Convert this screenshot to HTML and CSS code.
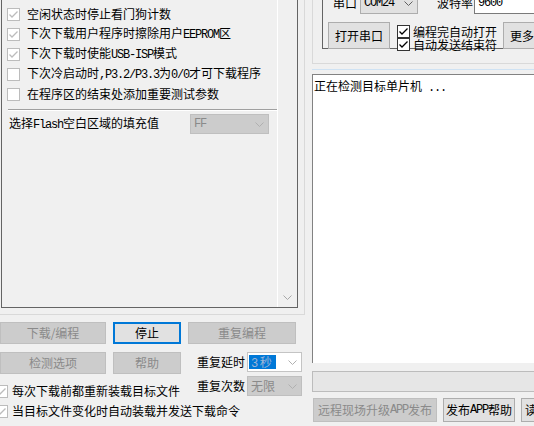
FILE: index.html
```html
<!DOCTYPE html>
<html lang="zh-CN">
<head>
  <meta charset="UTF-8">
  <meta name="viewport" content="width=device-width, initial-scale=1.0">
  <title>STC-ISP</title>
  <link rel="stylesheet" href="styles.css">
</head>
<body>
  <div class="window">
    <div class="left">
      <div class="page">
        <div class="options">
          <div class="opt-list">
            <div class="opt"><span class="cb dis"><svg viewBox="0 0 11 11"><path d="M1.5 5.5l2.5 2.5 5.5-5.5"/></svg></span><span>空闲状态时停止看门狗计数</span></div>
            <div class="opt"><span class="cb dis"><svg viewBox="0 0 11 11"><path d="M1.5 5.5l2.5 2.5 5.5-5.5"/></svg></span><span>下次下载用户程序时擦除用户<span class="en">EEPROM</span>区</span></div>
            <div class="opt"><span class="cb dis"><svg viewBox="0 0 11 11"><path d="M1.5 5.5l2.5 2.5 5.5-5.5"/></svg></span><span>下次下载时使能<span class="en">USB-ISP</span>模式</span></div>
            <div class="opt"><span class="cb dis"></span><span>下次冷启动时<span class="en">,P3.2/P3.3</span>为<span class="en">0/0</span>才可下载程序</span></div>
            <div class="opt"><span class="cb dis"></span><span>在程序区的结束处添加重要测试参数</span></div>
            <div class="sep"></div>
            <div class="fill-row">
              <span>选择<span class="en">Flash</span>空白区域的填充值</span>
              <div class="combo dis fill-combo"><span class="en">FF</span><svg class="chev" viewBox="0 0 9 5"><path d="M0.5 0.5l4 4 4-4"/></svg></div>
            </div>
          </div>
          <div class="vscroll"><svg class="chev" viewBox="0 0 9 5"><path d="M0.5 0.5l4 4 4-4"/></svg></div>
        </div>
      </div>

      <div class="btn-grid">
        <button class="btn dis">下载/编程</button>
        <button class="btn focus">停止</button>
        <button class="btn dis">重复编程</button>
        <button class="btn dis">检测选项</button>
        <button class="btn dis">帮助</button>
        <div class="field">
          <span>重复延时</span>
          <div class="combo edit"><span class="sel"><span class="en">3</span> 秒</span><svg class="chev" viewBox="0 0 9 5"><path d="M0.5 0.5l4 4 4-4"/></svg></div>
        </div>
      </div>

      <div class="extra">
        <div class="field count">
          <span>重复次数</span>
          <div class="combo dis"><span>无限</span><svg class="chev" viewBox="0 0 9 5"><path d="M0.5 0.5l4 4 4-4"/></svg></div>
        </div>
        <div class="chk chk-a"><span class="cb dis"><svg viewBox="0 0 11 11"><path d="M1.5 5.5l2.5 2.5 5.5-5.5"/></svg></span><span>每次下载前都重新装载目标文件</span></div>
        <div class="chk chk-b"><span class="cb dis"><svg viewBox="0 0 11 11"><path d="M1.5 5.5l2.5 2.5 5.5-5.5"/></svg></span><span>当目标文件变化时自动装载并发送下载命令</span></div>
      </div>
    </div>

    <div class="right">
      <div class="port-frame">
        <div class="group">
          <div class="port-row">
            <span class="port-label">串口</span>
            <div class="combo list com"><span class="en">COM24</span><svg class="chev" viewBox="0 0 9 5"><path d="M0.5 0.5l4 4 4-4"/></svg></div>
            <span class="baud-label">波特率</span>
            <div class="combo baud"><span class="en">9600</span></div>
          </div>
          <div class="open-row">
            <button class="btn open">打开串口</button>
            <div class="auto-checks">
              <div class="chk small"><span class="cb"><svg viewBox="0 0 11 11"><path d="M1.5 5.5l2.5 2.5 5.5-5.5"/></svg></span><span>编程完自动打开</span></div>
              <div class="chk small"><span class="cb"><svg viewBox="0 0 11 11"><path d="M1.5 5.5l2.5 2.5 5.5-5.5"/></svg></span><span>自动发送结束符</span></div>
            </div>
            <button class="btn more">更多</button>
          </div>
        </div>
      </div>
      <div class="split"></div>
      <div class="log">正在检测目标单片机<span class="en"> ...</span></div>
      <div class="progress"></div>
      <div class="actions">
        <button class="btn dis publish">远程现场升级<span class="en">APP</span>发布</button>
        <button class="btn app-help">发布<span class="en">APP</span>帮助</button>
        <button class="btn read">读</button>
      </div>
    </div>
  </div>
</body>
</html>
```

FILE: styles.css
```css
/* Base */
* { box-sizing: border-box; }

body {
  margin: 0;
  width: 534px;
  height: 426px;
  overflow: hidden;
  background: #f0f0f0;
  font-family: "Noto Sans CJK SC", sans-serif;
  font-size: 12px;
  line-height: 16px;
  color: #000;
}

.en {
  font-family: "Liberation Mono", monospace;
  font-size: 12px;
  letter-spacing: -1.2px;
}

.window {
  display: grid;
  grid-template-columns: 312px 222px;
  height: 426px;
  overflow: hidden;
}

/* Checkboxes */
.cb {
  width: 13px;
  height: 13px;
  flex-shrink: 0;
  border: 1px solid #333;
  background: #fff;
  display: flex;
  align-items: center;
  justify-content: center;
}

.cb svg {
  width: 11px;
  height: 11px;
  fill: none;
  stroke: #000;
  stroke-width: 1.3;
}

.cb.dis { border-color: #bcbcbc; }
.cb.dis svg { stroke: #bcbcbc; }

.chev {
  width: 9px;
  height: 5px;
  fill: none;
  stroke: #606060;
  stroke-width: 1;
  flex-shrink: 0;
}

/* Buttons */
.btn {
  font: inherit;
  color: #000;
  padding: 0;
  margin: 0;
  height: 22px;
  border: 1px solid #adadad;
  background: #e1e1e1;
  display: flex;
  align-items: center;
  justify-content: center;
  flex-shrink: 0;
  white-space: nowrap;
}

.btn.dis {
  background: #cccccc;
  border-color: #bfbfbf;
  color: #8a8a8a;
}

.btn.focus {
  border: 2px solid #0078d7;
}

/* Combos */
.combo {
  display: flex;
  align-items: center;
  height: 20px;
  border: 1px solid #7a7a7a;
  background: #fff;
  padding: 0 4px 0 3px;
  flex-shrink: 0;
}

.combo .chev { margin-left: auto; }

.combo.dis {
  background: #cccccc;
  border-color: #bfbfbf;
  color: #8a8a8a;
}

.combo.dis .chev { stroke: #b0b0b0; }

/* Left option page */
.page {
  width: 305px;
  height: 315px;
  padding-left: 1px;
  border-right: 1px solid #d9d9d9;
  border-bottom: 1px solid #d9d9d9;
}

.options {
  display: flex;
  width: 297px;
  height: 308px;
  border: 1px solid #646464;
  border-top: none;
}

.opt-list {
  flex: 1;
  padding: 4px 0 0 5px;
}

.opt {
  display: flex;
  align-items: center;
  gap: 7px;
  height: 20px;
  white-space: nowrap;
}

.sep {
  margin: 5px 0 0 1px;
  border-top: 1px solid #a0a0a0;
  border-bottom: 1px solid #fff;
}

.fill-row {
  display: grid;
  grid-template-columns: 181px 79px;
  align-items: center;
  margin-top: 3px;
  padding-left: 2px;
  white-space: nowrap;
}

.vscroll {
  width: 20px;
  border-left: 1px solid #fff;
  display: flex;
  align-items: flex-end;
  justify-content: center;
  padding-bottom: 7px;
}

.vscroll .chev { stroke: #a8a8a8; }

/* Left bottom controls */
.btn-grid {
  display: grid;
  grid-template-columns: 106px 68px 108px;
  column-gap: 7px;
  row-gap: 8px;
  margin-top: 7px;
}

.field {
  display: flex;
  align-items: flex-start;
  gap: 2px;
  padding-left: 9px;
  white-space: nowrap;
}

.field > span { line-height: 20px; }

.field .combo { width: 55px; }

.combo.edit { border-color: #c4c4c4; padding-left: 1px; }
.combo.edit .chev { stroke: #b0b0b0; }

.sel {
  background: #0078d7;
  color: #9db4d6;
  width: 27px;
  height: 14px;
  line-height: 14px;
  padding-left: 2px;
}

.extra {
  display: grid;
  grid-template-columns: 188px 108px;
  grid-template-rows: 5px 20px 20px;
  margin-top: 2px;
}

.count {
  grid-column: 2;
  grid-row: 1 / 3;
}

.chk {
  display: flex;
  align-items: center;
  gap: 4px;
  white-space: nowrap;
}

.chk-a {
  grid-column: 1;
  grid-row: 2;
  margin-left: -5px;
}

.chk-b {
  grid-column: 1 / 3;
  grid-row: 3;
  margin-left: -5px;
}

/* Right side */
.right {
  display: flex;
  flex-direction: column;
  min-width: 0;
  overflow: hidden;
}

.port-frame {
  height: 64px;
  border-left: 1px solid #d9d9d9;
  border-bottom: 1px solid #d9d9d9;
  padding-left: 9px;
}

.group {
  height: 57px;
  border-left: 1px solid #646464;
  border-bottom: 1px solid #646464;
  padding-left: 5px;
}

.port-row {
  display: flex;
  align-items: center;
  height: 22px;
  margin-top: -8px;
  white-space: nowrap;
}

.port-label { margin-left: 5px; margin-right: 3px; }

.combo.list {
  background: #e1e1e1;
  border-color: #adadad;
}

.com { width: 58px; height: 22px; }

.baud-label { margin-left: 19px; margin-right: 1px; }

.baud { width: 62px; height: 22px; }

.open-row {
  display: flex;
  margin-top: 8px;
  white-space: nowrap;
}

.open {
  width: 62px;
  height: 27px;
}

.auto-checks {
  margin: 3px 0 0 7px;
  width: 100px;
}

.chk.small {
  gap: 3px;
  height: 13px;
  line-height: 13px;
}

.more {
  width: 38px;
  height: 27px;
  margin-left: 6px;
}

.split {
  margin-top: 5px;
  height: 5px;
  border-top: 1px solid #cfe2f3;
}

.log {
  height: 289px;
  background: #fff;
  border-left: 1px solid #828282;
  border-top: 1px solid #828282;
  padding: 3px 0 0 1px;
  white-space: nowrap;
}

.progress {
  margin-top: 8px;
  height: 21px;
  background: #e6e6e6;
  border: 1px solid #bcbcbc;
  border-right: none;
}

.actions {
  display: flex;
  gap: 6px;
  margin: 6px 0 0 1px;
}

.actions .btn { height: 24px; }

.publish { width: 124px; }
.app-help { width: 72px; }
.read { width: 20px; }
```
